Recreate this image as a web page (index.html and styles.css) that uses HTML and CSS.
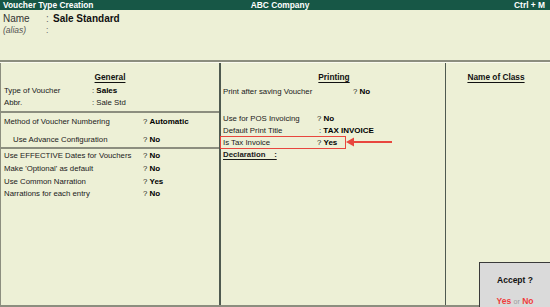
FILE: index.html
```html
<!DOCTYPE html>
<html>
<head>
<meta charset="utf-8">
<title>Voucher Type Creation</title>
<link rel="stylesheet" href="styles.css">
</head>
<body>
<div class="screen">

  <div class="titlebar">
    <span class="tleft">Voucher Type Creation</span>
    <span class="tmid">ABC Company</span>
    <span class="tright">Ctrl + M</span>
  </div>

  <div class="header">
    <div class="hrow"><span class="hlabel">Name</span><span class="hcolon">:</span><span class="hname">Sale Standard</span></div>
    <div class="hrow alias"><span class="hlabel">(alias)</span><span class="hcolon">:</span></div>
  </div>

  <div class="body">
    <!-- General -->
    <div class="col colleft">
      <div class="sect s1">
        <div class="heading">General</div>
        <div class="frow first"><span>Type of Voucher</span><span>: <b>Sales</b></span></div>
        <div class="frow"><span>Abbr.</span><span>: Sale Std</span></div>
      </div>
      <div class="sect s2">
        <div class="frow"><span>Method of Voucher Numbering</span><span>? <b>Automatic</b></span></div>
        <div class="frow sub"><span class="indent">Use Advance Configuration</span><span>? <b>No</b></span></div>
      </div>
      <div class="sect s3">
        <div class="frow"><span>Use EFFECTIVE Dates for Vouchers</span><span>? <b>No</b></span></div>
        <div class="frow"><span>Make 'Optional' as default</span><span>? <b>No</b></span></div>
        <div class="frow"><span>Use Common Narration</span><span>? <b>Yes</b></span></div>
        <div class="frow last"><span>Narrations for each entry</span><span>? <b>No</b></span></div>
      </div>
    </div>

    <!-- Printing -->
    <div class="col colmid">
      <div class="heading">Printing</div>
      <div class="frow print"><span>Print after saving Voucher</span><span>? <b>No</b></span></div>
      <div class="frow pos"><span>Use for POS Invoicing</span><span>? <b>No</b></span></div>
      <div class="frow title"><span>Default Print Title</span><span>: <b>TAX INVOICE</b></span></div>
      <div class="frow taxbox"><span>Is Tax Invoice</span><span>? <b>Yes</b></span></div>
      <div class="decl">Declaration&nbsp;&nbsp;&nbsp; :</div>
    </div>

    <!-- Class -->
    <div class="col colright">
      <div class="heading">Name of Class</div>
    </div>
  </div>

  <svg class="arrow" width="46" height="10" viewBox="0 0 46 10">
    <polygon points="0,5 8,0.5 8,9.5" fill="#e8463e"/>
    <rect x="7" y="4" width="39" height="2" fill="#e8463e"/>
  </svg>

  <div class="accept">
    <div class="aq">Accept ?</div>
    <div class="ayn"><span class="red">Yes</span> <span class="or">or</span> <span class="red">No</span></div>
  </div>

</div>
</body>
</html>
```

FILE: styles.css
```css
* {
    box-sizing: border-box;
}
body {
    margin: 0;
    font-family: "Liberation Sans", Arial, Helvetica, sans-serif;
    color: #1a1a1a;
    background: #edf0d6;
}
.screen {
    position: relative;
    width: 550px;
    height: 307px;
    overflow: hidden;
    background: #edf0d6;
}

/* title bar */
.titlebar {
    height: 10px;
    background: #175746;
    color: #ffffff;
    font-size: 8.4px;
    font-weight: bold;
    line-height: 10px;
    display: grid;
    grid-template-columns: 1fr auto 1fr;
    padding: 0 5px 0 3px;
}
.tmid {
    padding-left: 12px;
}
.tright {
    text-align: right;
}

/* name / alias */
.header {
    height: 52px;
    padding-top: 3px;
    border-bottom: 2px solid #8c8e7f;
}
.hrow {
    display: flex;
    font-size: 10px;
    line-height: 12px;
    color: #333333;
}
.hlabel {
    width: 46px;
    padding-left: 3px;
}
.hcolon {
    width: 7px;
    color: #666666;
}
.hname {
    font-weight: bold;
    color: #111111;
}
.alias {
    font-size: 8.5px;
    line-height: 11px;
    font-style: italic;
    color: #555555;
}
.alias .hcolon {
    font-style: normal;
}

/* three columns */
.body {
    display: flex;
    height: 245px;
    border-top: 1px solid #fafaf0;
    border-bottom: 2px solid #8c8e7f;
    font-size: 7.8px;
}
.col {
    height: 100%;
}
.colleft {
    width: 221px;
    border-left: 1px solid #8c8e7f;
    border-right: 2px solid #4f5a50;
}
.colmid {
    width: 225px;
    border-right: 1px solid #4f5a50;
    padding: 8px 0 0 2px;
}
.colright {
    flex: 1;
    padding: 8px 4px 0 0;
}
.heading {
    font-size: 8.3px;
    font-weight: bold;
    line-height: 13px;
    text-align: center;
    text-decoration: underline;
    text-underline-offset: 2px;
    color: #111111;
}
.colleft .heading {
    margin-left: -3px;
}
.frow {
    display: grid;
    line-height: 12px;
    white-space: nowrap;
}
.frow b {
    font-size: 8px;
    color: #000000;
}

.sect {
    padding-left: 3px;
    border-bottom: 2px solid #8c8e7f;
}
.s3 {
    border-bottom: none;
}
.s1 {
    padding-top: 8px;
    padding-bottom: 2px;
}
.s1 .frow {
    grid-template-columns: 88px auto;
}
.s1 .first {
    margin-top: 1px;
}
.s2 {
    padding-top: 3px;
    padding-bottom: 1px;
}
.s2 .frow, .s3 .frow {
    grid-template-columns: 139px auto;
}
.s2 .sub {
    margin-top: 6px;
}
.indent {
    padding-left: 9px;
}
.s3 .frow {
    line-height: 13px;
}
.s3 .last {
    line-height: 11px;
}

.print {
    grid-template-columns: 130px auto;
    margin-top: 2px;
}
.pos {
    grid-template-columns: 94px auto;
    margin-top: 15px;
}
.title {
    grid-template-columns: 96px auto;
}
.taxbox {
    grid-template-columns: 94px auto;
    width: 126px;
    margin: -1px 0 0 -3px;
    padding-left: 2px;
    border: 1px solid #e8463e;
    line-height: 11px;
}
.decl {
    line-height: 12px;
    font-weight: bold;
    text-decoration: underline;
    text-underline-offset: 2px;
}

.arrow {
    position: absolute;
    left: 346px;
    top: 137px;
}

/* accept box */
.accept {
    position: absolute;
    left: 479px;
    top: 262px;
    width: 72px;
    height: 46px;
    background: #dadada;
    border: 1px solid #3a3a3a;
    text-align: center;
}
.aq {
    font-size: 8.5px;
    font-weight: bold;
    line-height: 10px;
    margin-top: 12px;
    color: #111111;
}
.ayn {
    margin-top: 11px;
    font-size: 8.5px;
    line-height: 10px;
}
.red {
    color: #f03c3c;
    font-weight: bold;
}
.or {
    color: #9a9a9a;
    font-size: 7px;
}
```
